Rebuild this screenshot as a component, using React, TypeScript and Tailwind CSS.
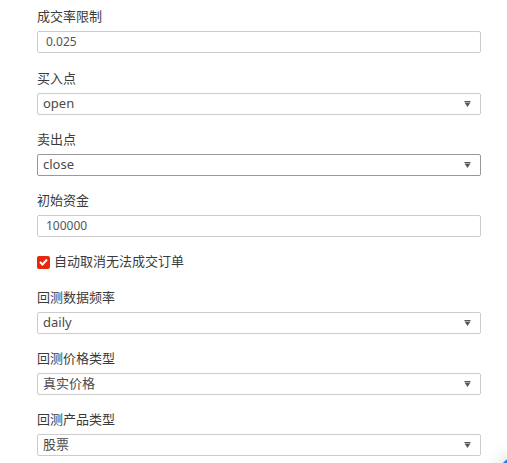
import React, { useState } from 'react';

const font = { fontFamily: '"Noto Sans", "Noto Sans CJK SC", sans-serif' };

function Label({ children }: { children: React.ReactNode }) {
  return <div className="h-[20px] leading-[20px] text-[13px] text-[#3a3a3a] mb-[5px]">{children}</div>;
}

function TextField({ label, value, gap = 'mb-[14px]' }: { label: string; value: string; gap?: string }) {
  return (
    <div className={gap}>
      <Label>{label}</Label>
      <div className="h-[22px] border border-[#cccccc] rounded-[2px] px-[8px] flex items-center text-[12px] text-[#555]">
        {value}
      </div>
    </div>
  );
}

function SelectField({ label, value, focused }: { label: string; value: string; focused?: boolean }) {
  return (
    <div className="mb-[14px]">
      <Label>{label}</Label>
      <div
        className={
          'h-[22px] border rounded-[2px] pl-[5px] pr-[8px] flex items-center justify-between text-[13px] text-[#4a4a4a] ' +
          (focused ? 'border-[#999999]' : 'border-[#cccccc]')
        }
      >
        <span>{value}</span>
        <svg width="7" height="6" viewBox="0 0 7 6" className="mr-[1px]">
          <rect x="0.5" y="0" width="6" height="1" fill="#555" />
          <polygon points="0.5,1.5 6.5,1.5 3.5,6" fill="#555" />
        </svg>
      </div>
    </div>
  );
}

export default function App() {
  const [cancel, setCancel] = useState(true);

  return (
    <div className="relative w-[507px] h-[463px] overflow-hidden bg-white" style={font}>
      <div className="w-[444px] ml-[37px] pt-[6px]">
        <TextField label="成交率限制" value="0.025" gap="mb-[15px]" />
        <SelectField label="买入点" value="open" />
        <SelectField label="卖出点" value="close" focused />
        <TextField label="初始资金" value="100000" />

        <label className="h-[22px] mb-[14px] flex items-center gap-[4px] text-[13px] text-[#3a3a3a] cursor-pointer">
          <span
            onClick={() => setCancel(!cancel)}
            className={
              'w-[13px] h-[13px] rounded-[2px] flex items-center justify-center ' +
              (cancel ? 'bg-[#e5280e]' : 'border border-[#999]')
            }
          >
            {cancel && (
              <svg width="9" height="8" viewBox="0 0 9 8">
                <path d="M1 4 L3.5 6.5 L8 1.5" stroke="#fff" strokeWidth="2" fill="none" />
              </svg>
            )}
          </span>
          自动取消无法成交订单
        </label>

        <SelectField label="回测数据频率" value="daily" />
        <SelectField label="回测价格类型" value="真实价格" />
        <SelectField label="回测产品类型" value="股票" />
      </div>

      <div className="absolute left-[497px] top-[456px] w-[44px] h-[44px] rounded-full bg-[#2f7de1] shadow-[0_0_18px_rgba(0,0,0,0.18)]" />
    </div>
  );
}
